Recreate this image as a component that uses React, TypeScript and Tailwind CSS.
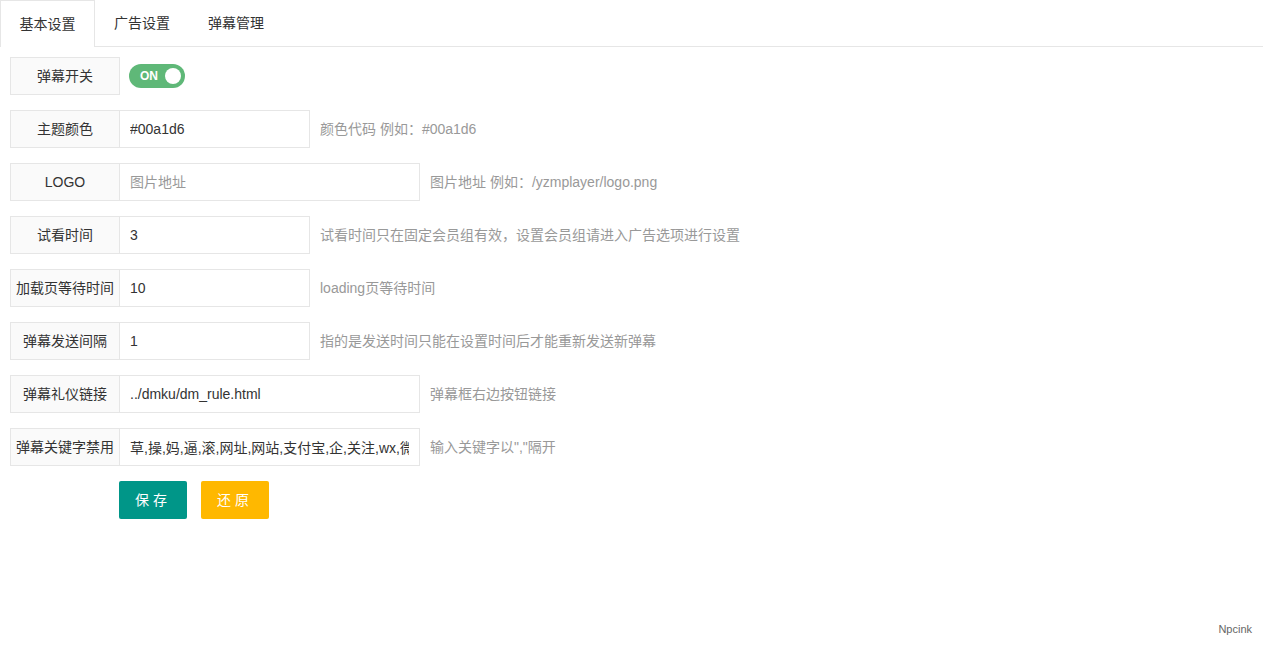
const FONT = { fontFamily: '"Liberation Sans", "Noto Sans CJK SC", sans-serif' };

type Row = { label: string; value: string; placeholder?: string; wide?: boolean; hint: string };

const ROWS: Row[] = [
  { label: '主题颜色', value: '#00a1d6', hint: '颜色代码 例如：#00a1d6' },
  { label: 'LOGO', value: '', placeholder: '图片地址', wide: true, hint: '图片地址 例如：/yzmplayer/logo.png' },
  { label: '试看时间', value: '3', hint: '试看时间只在固定会员组有效，设置会员组请进入广告选项进行设置' },
  { label: '加载页等待时间', value: '10', hint: 'loading页等待时间' },
  { label: '弹幕发送间隔', value: '1', hint: '指的是发送时间只能在设置时间后才能重新发送新弹幕' },
  { label: '弹幕礼仪链接', value: '../dmku/dm_rule.html', wide: true, hint: '弹幕框右边按钮链接' },
  { label: '弹幕关键字禁用', value: '草,操,妈,逼,滚,网址,网站,支付宝,企,关注,wx,微信,qq,QQ', wide: true, hint: '输入关键字以","隔开' },
];

function Label({ text }: { text: string }) {
  return (
    <div className="w-[110px] h-[38px] shrink-0 flex items-center justify-center border border-[#e6e6e6] bg-[#fafafa] text-[14px] text-[#333] whitespace-nowrap">
      {text}
    </div>
  );
}

export default function App() {
  return (
    <div className="relative w-[1263px] h-[646px] bg-white text-[#333]" style={FONT}>
      <div className="flex h-[47px] border-b border-[#e6e6e6]">
        <div className="w-[95px] h-[47px] flex items-center justify-center border border-b-0 border-[#e6e6e6] bg-white text-[14px] -mb-px">基本设置</div>
        <div className="w-[94px] flex items-center justify-center text-[14px]">广告设置</div>
        <div className="w-[94px] flex items-center justify-center text-[14px]">弹幕管理</div>
      </div>
      <div className="pl-[10px] pt-[10px] flex flex-col gap-[15px]">
        <div className="flex items-center h-[38px]">
          <Label text="弹幕开关" />
          <div className="ml-[9px] w-[56px] h-[24px] rounded-full bg-[#5FB878] flex items-center justify-between pl-[11px] pr-[4px]">
            <span className="text-white text-[12px] font-bold">ON</span>
            <span className="w-[16px] h-[16px] rounded-full bg-white" />
          </div>
        </div>
        {ROWS.map((r) => (
          <div key={r.label} className="flex items-center h-[38px]">
            <Label text={r.label} />
            <input
              readOnly
              value={r.value}
              placeholder={r.placeholder}
              className={`${r.wide ? 'w-[300px]' : 'w-[190px]'} h-[38px] border border-l-0 border-[#e6e6e6] px-[10px] text-[14px] text-[#333] placeholder:text-[#999] outline-none`}
            />
            <span className="ml-[10px] text-[14px] text-[#999] whitespace-nowrap">{r.hint}</span>
          </div>
        ))}
        <div className="flex gap-[14px] pl-[109px]">
          <button className="w-[68px] h-[38px] bg-[#009688] text-white text-[14px] tracking-[4px] rounded-[2px]">保存</button>
          <button className="w-[68px] h-[38px] bg-[#FFB800] text-white text-[14px] tracking-[4px] rounded-[2px]">还原</button>
        </div>
      </div>
      <div className="absolute right-[11px] bottom-[9px] text-[11px] text-[#666]">Npcink</div>
    </div>
  );
}
